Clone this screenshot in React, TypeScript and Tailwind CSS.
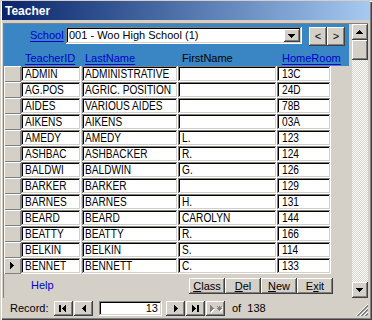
import React from 'react';

const rows: [string, string, string, string][] = [
  ['ADMIN', 'ADMINISTRATIVE', '', '13C'],
  ['AG.POS', 'AGRIC. POSITION', '', '24D'],
  ['AIDES', 'VARIOUS AIDES', '', '78B'],
  ['AIKENS', 'AIKENS', '', '03A'],
  ['AMEDY', 'AMEDY', 'L.', '123'],
  ['ASHBAC', 'ASHBACKER', 'R.', '124'],
  ['BALDWI', 'BALDWIN', 'G.', '126'],
  ['BARKER', 'BARKER', '', '129'],
  ['BARNES', 'BARNES', 'H.', '131'],
  ['BEARD', 'BEARD', 'CAROLYN', '144'],
  ['BEATTY', 'BEATTY', 'R.', '166'],
  ['BELKIN', 'BELKIN', 'S.', '114'],
  ['BENNET', 'BENNETT', 'C.', '133'],
];

const raised =
  'bg-[#d4d0c8] shadow-[inset_-1px_-1px_#404040,inset_1px_1px_#ffffff,inset_-2px_-2px_#808080,inset_2px_2px_#d4d0c8]';
const sunken =
  'bg-white shadow-[inset_-1px_-1px_#ffffff,inset_1px_1px_#808080,inset_-2px_-2px_#d4d0c8,inset_2px_2px_#000000]';

// little pixel triangles, drawn row by row so they stay crisp
function Tri({ dir, x, y, color = '#000' }: { dir: 'up' | 'down' | 'left' | 'right'; x: number; y: number; color?: string }) {
  const r = [0, 1, 2, 3];
  return (
    <g fill={color}>
      {r.map((i) => {
        if (dir === 'down') return <rect key={i} x={x + i} y={y + i} width={7 - 2 * i} height={1} />;
        if (dir === 'up') return <rect key={i} x={x + 3 - i} y={y + i} width={2 * i + 1} height={1} />;
        if (dir === 'left') return <rect key={i} x={x + i} y={y + 3 - i} width={1} height={2 * i + 1} />;
        return <rect key={i} x={x + i} y={y + i} width={1} height={7 - 2 * i} />;
      })}
    </g>
  );
}

function ScrollBtn({ dir }: { dir: 'up' | 'down' }) {
  return (
    <div className={`w-[16px] h-[16px] ${raised}`}>
      <svg width="16" height="16" shapeRendering="crispEdges">
        <Tri dir={dir} x={4} y={6} />
      </svg>
    </div>
  );
}

function NavBtn({ kind }: { kind: 'first' | 'prev' | 'next' | 'last' | 'new' }) {
  return (
    <div className={`w-[19px] h-[15px] ${raised}`}>
      <svg width="19" height="15" shapeRendering="crispEdges">
        {kind === 'first' && (
          <>
            <rect x={5} y={4} width={2} height={7} fill="#000" />
            <Tri dir="left" x={8} y={4} />
          </>
        )}
        {kind === 'prev' && <Tri dir="left" x={8} y={4} />}
        {kind === 'next' && <Tri dir="right" x={8} y={4} />}
        {kind === 'last' && (
          <>
            <Tri dir="right" x={6} y={4} />
            <rect x={11} y={4} width={2} height={7} fill="#000" />
          </>
        )}
        {kind === 'new' && (
          <>
            <Tri dir="right" x={5} y={5} color="#ffffff" />
            <Tri dir="right" x={4} y={4} color="#808080" />
            <g stroke="#ffffff">
              <path d="M13.5 5v5M11 7.5h5M11.5 5.5l4 4M15.5 5.5l-4 4" transform="translate(1 1)" />
            </g>
            <g stroke="#808080">
              <path d="M13.5 5v5M11 7.5h5M11.5 5.5l4 4M15.5 5.5l-4 4" />
            </g>
          </>
        )}
      </svg>
    </div>
  );
}

function Cell({ w, pl, text }: { w: string; pl: string; text: string }) {
  return (
    <div className={`${w} h-full ${sunken} ${pl} pt-[1px] overflow-hidden whitespace-nowrap text-[12.5px] leading-[14px]`}>
      {/* the original font is a tall narrow one; squeeze Liberation Sans to match */}
      <span className="inline-block origin-left scale-x-[0.81]">{text}</span>
    </div>
  );
}

export default function App() {
  return (
    <div className="w-[372px] h-[320px] bg-[#d4d0c8] overflow-hidden font-['Liberation_Sans',Arial,sans-serif] text-[11px] text-black shadow-[inset_1px_1px_#d4d0c8,inset_2px_2px_#ffffff,inset_-1px_-1px_#404040,inset_-2px_-2px_#808080]">
      {/* title bar */}
      <div className="mx-[2px] mt-[1px] h-[19px] bg-linear-to-r from-[#0a246a] to-[#a6caf0] pl-[3px] pt-[3px] text-white font-bold text-[12px] leading-[15px]">
        Teacher
      </div>

      {/* client area */}
      <div className="ml-[3px] mt-[3px] w-[365px] flex border-l border-t border-[#808080]">
        <div className="w-[345px] h-[274px] flex flex-col">
          {/* form header */}
          <div className="h-[42px] bg-[#3a85c3] flex flex-col">
            <div className="h-[28px] flex items-start pt-[3px]">
              <div className="ml-[26px] w-[36px] mt-[2px] leading-[13px] text-[#0000cc] underline underline-offset-[2px]">School</div>
              <div className={`w-[236px] h-[17px] flex ${sunken}`}>
                <div className="flex-1 pl-[3px] pt-[2px] leading-[13px] whitespace-nowrap">001 - Woo High School (1)</div>
                <div className={`w-[16px] h-[13px] mt-[2px] mr-[2px] ${raised}`}>
                  <svg width="16" height="13" shapeRendering="crispEdges">
                    <Tri dir="down" x={4} y={5} />
                  </svg>
                </div>
              </div>
              <div className={`ml-[7px] w-[18px] h-[19px] ${raised} flex items-center justify-center leading-[13px]`}>&lt;</div>
              <div className={`w-[18px] h-[19px] ${raised} flex items-center justify-center leading-[13px]`}>&gt;</div>
            </div>
            <div className="h-[14px] flex leading-[13px]">
              <div className="w-[17px]" />
              <div className="w-[61px] pl-[4px] text-[#0000cc] underline underline-offset-[2px]">TeacherID</div>
              <div className="w-[96px] pl-[3px] text-[#0000cc] underline underline-offset-[2px]">LastName</div>
              <div className="w-[99px] pl-[4px]">FirstName</div>
              <div className="w-[54px] pl-[5px] text-[#0000cc] underline underline-offset-[2px]">HomeRoom</div>
            </div>
          </div>

          {/* detail rows */}
          <div className="h-[208px] flex flex-col">
            {rows.map((r, i) => (
              <div key={r[0]} className="h-[16px] flex">
                <div className="w-[17px] h-full bg-[#d4d0c8] shadow-[inset_1px_1px_#ffffff,inset_-1px_-1px_#808080]">
                  {i === rows.length - 1 && (
                    <svg width="17" height="16" shapeRendering="crispEdges">
                      <Tri dir="right" x={6} y={4} />
                    </svg>
                  )}
                </div>
                <Cell w="w-[60px]" pl="pl-[4px]" text={r[0]} />
                <div className="w-[1px]" />
                <Cell w="w-[96px]" pl="pl-[3px]" text={r[1]} />
                <Cell w="w-[99px]" pl="pl-[4px]" text={r[2]} />
                <Cell w="w-[54px]" pl="pl-[5px]" text={r[3]} />
              </div>
            ))}
          </div>

          {/* form footer */}
          <div className="h-[24px] flex items-start pt-[4px]">
            <div className="ml-[27px] w-[158px] mt-[1px] leading-[13px] text-[#0000cc]">Help</div>
            {[
              ['C', 'lass'],
              ['D', 'el'],
              ['N', 'ew'],
            ].map(([u, rest]) => (
              <div key={u} className={`w-[36px] h-[16px] ${raised} flex items-center justify-center leading-[13px]`}>
                <span className="underline underline-offset-[1px]">{u}</span>
                {rest}
              </div>
            ))}
            <div className={`w-[36px] h-[16px] ${raised} flex items-center justify-center leading-[13px]`}>
              E<span className="underline underline-offset-[1px]">x</span>it
            </div>
          </div>
        </div>

        <div className="w-[3px]" />

        {/* vertical scrollbar */}
        <div className="w-[16px] h-[274px] flex flex-col">
          <ScrollBtn dir="up" />
          <div className={`w-[16px] h-[20px] ${raised}`} />
          <div className="flex-1 bg-[image:repeating-conic-gradient(#d4d0c8_0%_25%,#ffffff_0%_50%)] bg-[length:2px_2px]" />
          <ScrollBtn dir="down" />
        </div>
      </div>

      {/* record navigation */}
      <div className="h-[18px] flex items-start pt-[3px] pl-[10px] pr-[4px]">
        <div className="w-[44px] leading-[15px]">Record:</div>
        <NavBtn kind="first" />
        <div className="w-[1px]" />
        <NavBtn kind="prev" />
        <div className={`ml-[6px] w-[63px] h-[15px] ${sunken} text-right pr-[4px] leading-[15px]`}>13</div>
        <div className="ml-[4px]" />
        <NavBtn kind="next" />
        <div className="w-[1px]" />
        <NavBtn kind="last" />
        <div className="w-[1px]" />
        <NavBtn kind="new" />
        <div className="ml-[7px] leading-[15px] whitespace-pre">of  138</div>
        <div className="ml-auto self-end w-[12px] h-[12px]">
          <svg width="12" height="12" shapeRendering="crispEdges">
            {[0, 4, 8].map((o) => (
              <g key={o}>
                <path d={`M${12} ${o} L${o} ${12}`} stroke="#ffffff" />
                <path d={`M${12} ${o + 1} L${o + 1} ${12} M${12} ${o + 2} L${o + 2} ${12}`} stroke="#808080" />
              </g>
            ))}
          </svg>
        </div>
      </div>
    </div>
  );
}
